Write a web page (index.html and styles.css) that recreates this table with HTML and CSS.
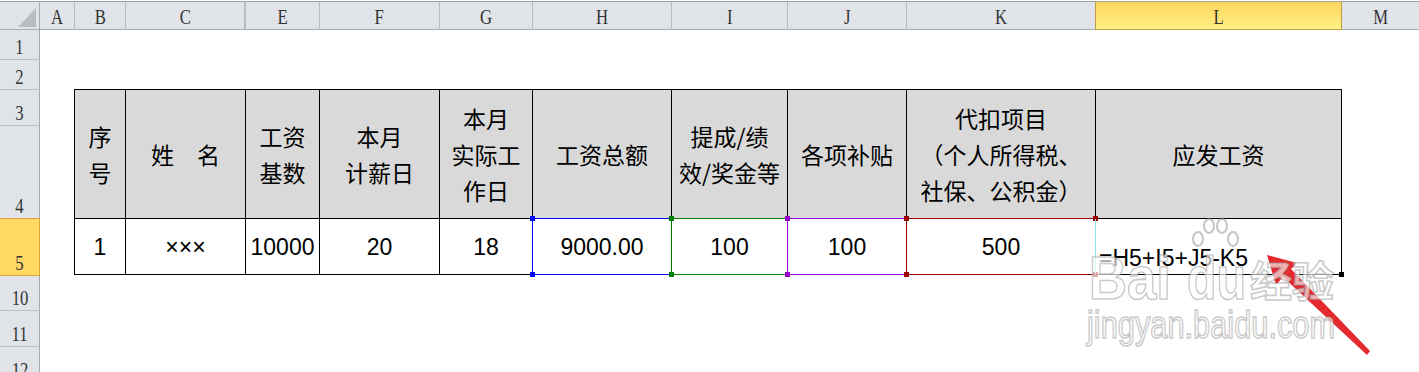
FILE: index.html
```html
<!DOCTYPE html>
<html lang="zh-CN">
<head>
<meta charset="utf-8">
<title>工资表</title>
<link rel="stylesheet" href="styles.css">
</head>
<body>
<div class="sheet">
  <div class="ch corner"></div>
  <div class="ch"><span class="lbl">A</span></div>
  <div class="ch"><span class="lbl">B</span></div>
  <div class="ch ch-hidden-next"><span class="lbl">C</span></div>
  <div class="ch"><span class="lbl">E</span></div>
  <div class="ch"><span class="lbl">F</span></div>
  <div class="ch"><span class="lbl">G</span></div>
  <div class="ch"><span class="lbl">H</span></div>
  <div class="ch"><span class="lbl">I</span></div>
  <div class="ch"><span class="lbl">J</span></div>
  <div class="ch"><span class="lbl">K</span></div>
  <div class="ch ch-sel"><span class="lbl">L</span></div>
  <div class="ch"><span class="lbl">M</span></div>

  <div class="rh r1"><span class="lbl">1</span></div>
  <div class="rh r2"><span class="lbl">2</span></div>
  <div class="rh r3"><span class="lbl">3</span></div>
  <div class="rh r4"><span class="lbl">4</span></div>
  <div class="rh r5 rh-sel"><span class="lbl">5</span></div>
  <div class="rh r10"><span class="lbl">10</span></div>
  <div class="rh r11"><span class="lbl">11</span></div>
  <div class="rh r12"><span class="lbl">12</span></div>

  <div class="th cB first"><div>序<br>号</div></div>
  <div class="th cC"><div>姓　名</div></div>
  <div class="th cE"><div>工资<br>基数</div></div>
  <div class="th cF"><div>本月<br>计薪日</div></div>
  <div class="th cG"><div>本月<br>实际工<br>作日</div></div>
  <div class="th cH"><div>工资总额</div></div>
  <div class="th cI"><div>提成/绩<br>效/奖金等</div></div>
  <div class="th cJ"><div>各项补贴</div></div>
  <div class="th cK"><div>代扣项目<br>（个人所得税、<br>社保、公积金）</div></div>
  <div class="th cL"><div>应发工资</div></div>

  <div class="td cB first">1</div>
  <div class="td cC">×××</div>
  <div class="td cE">10000</div>
  <div class="td cF">20</div>
  <div class="td cG">18</div>
  <div class="td cH ref ref-blue">9000.00</div>
  <div class="td cI ref ref-green">100</div>
  <div class="td cJ ref ref-purple">100</div>
  <div class="td cK ref ref-red">500</div>
  <div class="td cL active">=H5+I5+J5-K5</div>

  <svg class="arrow" width="125" height="120" viewBox="0 0 125 120" aria-hidden="true">
    <polygon points="12,10 42,18 36,24 115,106 112,110 28,32 21,40" fill="#e42a2e"/>
  </svg>

  <div class="wm wm-bai">Bai</div>
  <svg class="wm-paw" width="50" height="34" viewBox="0 0 50 34" aria-hidden="true">
    <g fill="rgba(255,255,255,0.65)" stroke="rgba(150,150,150,0.55)" stroke-width="2">
      <ellipse cx="8" cy="22" rx="5" ry="7"/>
      <ellipse cx="19" cy="9" rx="5" ry="7"/>
      <ellipse cx="32" cy="9" rx="5" ry="7"/>
      <ellipse cx="43" cy="22" rx="5" ry="7"/>
    </g>
  </svg>
  <div class="wm wm-du">du</div>
  <div class="wm wm-cn">经验</div>
  <div class="wm wm-url">jingyan.baidu.com</div>
</div>
</body>
</html>
```

FILE: styles.css
```css
html, body {
  margin: 0;
  padding: 0;
  width: 1419px;
  height: 372px;
  overflow: hidden;
  background: #ffffff;
}

.sheet {
  position: relative;
  display: grid;
  grid-template-columns: 40px 35px 51px 120px 74px 120px 93px 139px 116px 119px 189px 246px 78px;
  grid-template-rows: 30px 30px 30px 36px 93px 57px 35px 36px 36px;
  background: #ffffff;
}

/* ---------- column headers ---------- */
.ch {
  grid-row: 1;
  margin-top: 1px;
  box-sizing: border-box;
  background: #e0e4e9;
  border-top: 1px solid #9ea3a9;
  border-right: 1px solid #b6bcc3;
  border-bottom: 1px solid #a7adb5;
  display: flex;
  align-items: flex-end;
  justify-content: center;
  padding-bottom: 1px;
  overflow: hidden;
}

.lbl {
  display: inline-block;
  font-family: "Liberation Serif", "DejaVu Serif", serif;
  font-size: 22px;
  line-height: 22px;
  color: #333333;
  transform: scaleX(0.76);
}

.corner {
  position: relative;
  border-right-color: #a7adb5;
}
.corner::after {
  content: "";
  position: absolute;
  right: 3px;
  bottom: 2px;
  width: 18px;
  height: 19px;
  background: #b8bdc3;
  clip-path: polygon(100% 0, 100% 100%, 0 100%);
}

.ch-hidden-next {
  box-shadow: inset -1px 0 0 #b6bcc3;
}

.ch-sel {
  margin-left: -1px;
  background: linear-gradient(#ffd65d, #fff085);
  border-left: 1px solid #c49c43;
  border-right: 1px solid #c49c43;
  border-bottom: 1px solid #c49c43;
  color: #333;
}

/* ---------- row headers ---------- */
.rh {
  grid-column: 1;
  box-sizing: border-box;
  background: #e0e4e9;
  border-right: 1px solid #a3a9b0;
  border-bottom: 1px solid #bcc1c7;
  display: flex;
  align-items: flex-end;
  justify-content: center;
  padding-bottom: 1px;
  overflow: hidden;
}
.r1 { grid-row: 2; }
.r2 { grid-row: 3; }
.r3 { grid-row: 4; }
.r4 { grid-row: 5; }
.r5 { grid-row: 6; }
.r10 { grid-row: 7; }
.r11 { grid-row: 8; }
.r12 { grid-row: 9; }

.rh-sel {
  margin-top: -1px;
  background: #ffd964;
  border-top: 1px solid #e2a23e;
  border-bottom: 1px solid #e2a23e;
  border-right: 1px solid #e2a23e;
}

/* ---------- table columns ---------- */
.cB { grid-column: 3; }
.cC { grid-column: 4; }
.cE { grid-column: 5; }
.cF { grid-column: 6; }
.cG { grid-column: 7; }
.cH { grid-column: 8; }
.cI { grid-column: 9; }
.cJ { grid-column: 10; }
.cK { grid-column: 11; }
.cL { grid-column: 12; }

.th {
  grid-row: 4 / span 2;
  margin-top: -1px;
  box-sizing: border-box;
  background: #d9d9d9;
  border-top: 1px solid #000;
  border-right: 1px solid #000;
  border-bottom: 1px solid #000;
  display: flex;
  align-items: center;
  justify-content: center;
  text-align: center;
  white-space: nowrap;
  font-family: "Noto Sans CJK SC", "Liberation Sans", sans-serif;
  font-size: 23px;
  line-height: 36px;
  color: #000;
}

.td {
  grid-row: 6;
  margin-bottom: 1px;
  box-sizing: border-box;
  background: #ffffff;
  border-right: 1px solid #000;
  border-bottom: 1px solid #000;
  display: flex;
  align-items: center;
  justify-content: center;
  font-family: "Liberation Sans", Arial, sans-serif;
  font-size: 23px;
  line-height: 26px;
  color: #000;
  white-space: nowrap;
  position: relative;
}

.first {
  margin-left: -1px;
  border-left: 1px solid #000;
}

/* ---------- formula reference ranges ---------- */
.ref::before {
  content: "";
  position: absolute;
  top: -1px;
  left: -1px;
  right: -1px;
  bottom: -1px;
  border: 1px solid var(--rc);
  pointer-events: none;
}
.ref::after {
  content: "";
  position: absolute;
  top: -3px;
  left: -3px;
  right: -3px;
  bottom: -3px;
  background:
    linear-gradient(var(--rc), var(--rc)) left top / 5px 5px no-repeat,
    linear-gradient(var(--rc), var(--rc)) right top / 5px 5px no-repeat,
    linear-gradient(var(--rc), var(--rc)) left bottom / 5px 5px no-repeat,
    linear-gradient(var(--rc), var(--rc)) right bottom / 5px 5px no-repeat;
  pointer-events: none;
  z-index: 1;
}
.ref-blue { --rc: #0000ff; }
.ref-green { --rc: #008000; }
.ref-purple { --rc: #9900cc; }
.ref-red { --rc: #990000; }

/* ---------- active cell ---------- */
.active {
  align-items: flex-end;
  justify-content: flex-start;
  padding: 0 0 3px 3px;
}
.active::before {
  content: "";
  position: absolute;
  left: -1px;
  top: 0;
  bottom: 0;
  width: 1px;
  background: #8fe3ea;
  z-index: 2;
}
.active::after {
  content: "";
  position: absolute;
  right: -3px;
  bottom: -3px;
  width: 5px;
  height: 5px;
  background: #000;
}

/* ---------- overlay: arrow + watermark ---------- */
.arrow {
  position: absolute;
  left: 1255px;
  top: 245px;
  z-index: 3;
}

.wm {
  position: absolute;
  z-index: 4;
  white-space: nowrap;
  font-family: "Liberation Sans", Arial, sans-serif;
  font-weight: bold;
  color: rgba(255, 255, 255, 0.65);
  -webkit-text-stroke: 1.6px rgba(150, 150, 150, 0.5);
  transform-origin: left top;
  pointer-events: none;
}
.wm-bai {
  left: 1089px;
  top: 247px;
  font-size: 62px;
  line-height: 62px;
  transform: scaleX(0.85);
}
.wm-du {
  left: 1187px;
  top: 247px;
  font-size: 62px;
  line-height: 62px;
  transform: scaleX(0.78);
}
.wm-paw {
  position: absolute;
  left: 1190px;
  top: 217px;
  z-index: 4;
}
.wm-cn {
  left: 1250px;
  top: 258px;
  font-family: "Noto Sans CJK SC", sans-serif;
  font-weight: bold;
  font-size: 42px;
  line-height: 42px;
}
.wm-url {
  left: 1087px;
  top: 306px;
  font-weight: normal;
  font-size: 38px;
  line-height: 38px;
  transform: scaleX(0.81);
}
```
